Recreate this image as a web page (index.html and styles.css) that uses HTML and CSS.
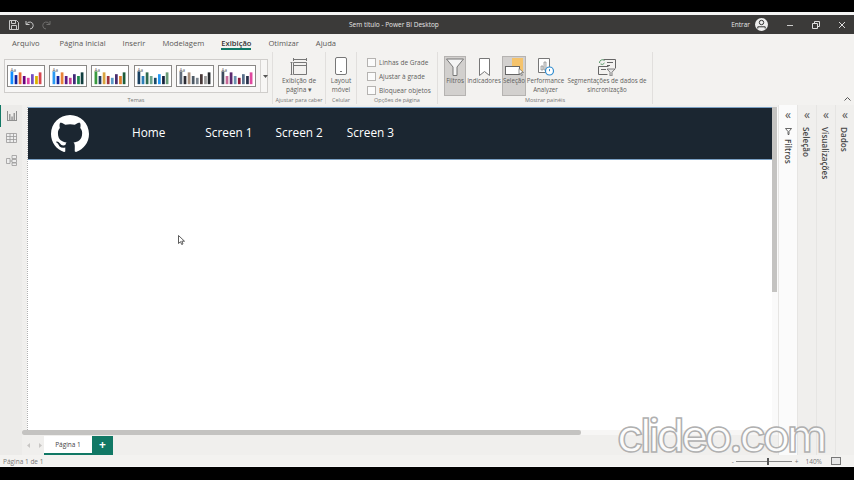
FILE: index.html
```html
<!DOCTYPE html>
<html lang="pt-BR">
<head>
  <meta charset="UTF-8" />
  <title>Sem título - Power BI Desktop</title>
  <link rel="stylesheet" href="styles.css">
</head>
<body>
<div class="frame-edge"></div>
<div class="titlebar">
  <div class="quick">
    <svg width="10" height="10" viewBox="0 0 10 10"><path d="M.5.500h7l2 2v7H.5zM2.500.500v3h4v-3M2.500 9.500v-4h5v4" fill="none" stroke="#c8c8c8"/></svg>
    <svg width="10" height="10" viewBox="0 0 10 10"><path d="M1 1v3.500h3.500M1.500 4.200A3.500 3.500 0 1 1 5 9" fill="none" stroke="#c8c8c8"/></svg>
    <svg width="10" height="10" viewBox="0 0 10 10"><path d="M9 1v3.500H5.500M8.500 4.200A3.500 3.500 0 1 0 5 9" fill="none" stroke="#6f6e6d"/></svg>
  </div>
  <span class="doc-title">Sem título - Power BI Desktop</span>
  <div class="win-controls">
    <span class="signin">Entrar</span>
    <svg class="avatar" width="13" height="13" viewBox="0 0 13 13"><circle cx="6.500" cy="6.500" r="6.500" fill="#eee"/><circle cx="6.500" cy="4.500" r="2.200" fill="none" stroke="#333"/><path d="M2.800 10.500V8.800h7.400v1.700" fill="none" stroke="#333"/></svg>
    <svg class="min" width="8" height="8" viewBox="0 0 8 8"><path d="M1 4.500h6" stroke="#ccc"/></svg>
    <svg class="restore" width="8" height="8" viewBox="0 0 8 8"><path d="M.5 2.500h5v5h-5zM2.500 2.500v-2h5v5h-2" fill="none" stroke="#ddd"/></svg>
    <svg class="close" width="8" height="8" viewBox="0 0 8 8"><path d="M1 1l6 6M7 1L1 7" stroke="#ddd"/></svg>
  </div>
</div>

<nav class="tabs">
  <span>Arquivo</span>
  <span>Página Inicial</span>
  <span>Inserir</span>
  <span>Modelagem</span>
  <span class="active">Exibição</span>
  <span>Otimizar</span>
  <span>Ajuda</span>
</nav>

<section class="ribbon">
  <div class="group g-themes">
    <div class="group-body">
      <div class="themes">
        <svg class="theme" viewBox="0 0 38 22"><text x="2" y="7">Aa</text>
          <rect x="2" y="6" width="3" height="14" fill="#118dff"/><rect x="6.500" y="10" width="3" height="10" fill="#12239e"/><rect x="11" y="7" width="3" height="13" fill="#e66c37"/><rect x="15.500" y="11" width="3" height="9" fill="#6b007b"/><rect x="20" y="13" width="3" height="7" fill="#e044a7"/><rect x="24.500" y="9" width="3" height="11" fill="#744ec2"/><rect x="29" y="11" width="3" height="9" fill="#d9b300"/><rect x="33" y="7" width="3" height="13" fill="#d64550"/></svg>
        <svg class="theme" viewBox="0 0 38 22"><text x="2" y="7">Aa</text>
          <rect x="2" y="6" width="3" height="14" fill="#2b9af3"/><rect x="6.500" y="11" width="3" height="9" fill="#12239e"/><rect x="11" y="7" width="3" height="13" fill="#e8833a"/><rect x="15.500" y="11" width="3" height="9" fill="#5b1d87"/><rect x="20" y="13" width="3" height="7" fill="#c83d95"/><rect x="24.500" y="9" width="3" height="11" fill="#3f2a78"/><rect x="29" y="11" width="3" height="9" fill="#1f8a4c"/><rect x="33" y="7" width="3" height="13" fill="#0f3d3e"/></svg>
        <svg class="theme" viewBox="0 0 38 22"><text x="2" y="7">Aa</text>
          <rect x="2" y="6" width="3" height="14" fill="#3a9a3f"/><rect x="6.500" y="11" width="3" height="9" fill="#223a5e"/><rect x="11" y="7" width="3" height="13" fill="#d9a441"/><rect x="15.500" y="11" width="3" height="9" fill="#a1343c"/><rect x="20" y="13" width="3" height="7" fill="#5b9bc8"/><rect x="24.500" y="9" width="3" height="11" fill="#4a2c6d"/><rect x="29" y="11" width="3" height="9" fill="#e07b28"/><rect x="33" y="7" width="3" height="13" fill="#1d5c3a"/></svg>
        <svg class="theme" viewBox="0 0 38 22"><text x="2" y="7">Aa</text>
          <rect x="2" y="6" width="3" height="14" fill="#173f5f"/><rect x="6.500" y="11" width="3" height="9" fill="#2c7fb8"/><rect x="11" y="7" width="3" height="13" fill="#2f6b4f"/><rect x="15.500" y="11" width="3" height="9" fill="#6ea58c"/><rect x="20" y="13" width="3" height="7" fill="#1b4965"/><rect x="24.500" y="9" width="3" height="11" fill="#2196f3"/><rect x="29" y="11" width="3" height="9" fill="#14213d"/><rect x="33" y="7" width="3" height="13" fill="#6a9c78"/></svg>
        <svg class="theme" viewBox="0 0 38 22"><text x="2" y="7">Aa</text>
          <rect x="2" y="6" width="3" height="14" fill="#5f6b7a"/><rect x="6.500" y="11" width="3" height="9" fill="#2d2d34"/><rect x="11" y="7" width="3" height="13" fill="#a98f7b"/><rect x="15.500" y="11" width="3" height="9" fill="#4d5a66"/><rect x="20" y="13" width="3" height="7" fill="#7d8791"/><rect x="24.500" y="9" width="3" height="11" fill="#4a3a3a"/><rect x="29" y="11" width="3" height="9" fill="#9a9a9a"/><rect x="33" y="7" width="3" height="13" fill="#25282c"/></svg>
        <svg class="theme" viewBox="0 0 38 22"><text x="2" y="7">Aa</text>
          <rect x="2" y="6" width="3" height="14" fill="#3d4a5c"/><rect x="6.500" y="11" width="3" height="9" fill="#c76b98"/><rect x="11" y="7" width="3" height="13" fill="#5b2a6e"/><rect x="15.500" y="11" width="3" height="9" fill="#6c93b0"/><rect x="20" y="13" width="3" height="7" fill="#8e1b3a"/><rect x="24.500" y="9" width="3" height="11" fill="#59708c"/><rect x="29" y="11" width="3" height="9" fill="#27304a"/><rect x="33" y="7" width="3" height="13" fill="#e0489f"/></svg>
        <div class="theme-more">
          <svg width="5" height="3" viewBox="0 0 5 3"><path d="M0 0h5L2.500 3z" fill="#555"/></svg>
        </div>
      </div>
    </div>
    <div class="group-label">Temas</div>
  </div>

  <div class="group g-fit">
    <div class="group-body">
      <div class="rbtn">
        <svg class="ricon" width="18" height="18" viewBox="0 0 18 18"><path d="M3.500 5.500h13v12h-13zM3.500 8.500h13M.5 5.500h2M.5 17.500h2M1.500 5.500v12M3.500 2.500h13M3.500 1v3M16.500 1v3" fill="none" stroke="#777"/></svg>
        <span>Exibição de<br>página ▾</span>
      </div>
    </div>
    <div class="group-label">Ajustar para caber</div>
  </div>

  <div class="group g-cell">
    <div class="group-body">
      <div class="rbtn">
        <svg class="ricon" width="12" height="18" viewBox="0 0 12 18"><rect x=".5" y=".5" width="11" height="17" rx="1.500" fill="#fff" stroke="#777"/><path d="M5 14.500h2" stroke="#777"/></svg>
        <span>Layout<br>móvel</span>
      </div>
    </div>
    <div class="group-label">Celular</div>
  </div>

  <div class="group g-options">
    <div class="group-body">
      <div class="checks">
        <label class="check"><i></i>Linhas de Grade</label>
        <label class="check"><i></i>Ajustar à grade</label>
        <label class="check"><i></i>Bloquear objetos</label>
      </div>
    </div>
    <div class="group-label">Opções de página</div>
  </div>

  <div class="group g-panes">
    <div class="group-body panes-row">
      <div class="rbtn pane-btn on b-filter">
        <svg class="ricon" width="18" height="18" viewBox="0 0 18 18"><path d="M.5 1h17L11 9v8.500H7V9z" fill="#f4f4f4" stroke="#777"/></svg>
        <span>Filtros</span>
      </div>
      <div class="rbtn pane-btn b-mark">
        <svg class="ricon" width="11" height="18" viewBox="0 0 11 18"><path d="M.5.500h10v17l-5-4-5 4z" fill="#fff" stroke="#777"/></svg>
        <span>Indicadores</span>
      </div>
      <div class="rbtn pane-btn on b-sel">
        <svg class="ricon" width="19" height="18" viewBox="0 0 19 18"><rect x="7" y="0" width="11" height="15" fill="#f5c36b"/><rect x=".5" y="8.500" width="14" height="8" fill="#fff" stroke="#666"/><path d="M14 10.500l4.500 4-2.300.2 1.200 2.500-1 .5-1.200-2.500-1.200 1.500z" fill="#fff" stroke="#666" stroke-width=".7"/></svg>
        <span>Seleção</span>
      </div>
      <div class="rbtn pane-btn b-perf">
        <svg class="ricon" width="18" height="18" viewBox="0 0 18 18"><path d="M1.500.500h11v14h-11z" fill="#fff" stroke="#777"/><path d="M4 12V8h2v4zM7 12V4h2v8z" fill="#e8e8e8" stroke="#888" stroke-width=".7"/><circle cx="12.500" cy="13" r="4" fill="#fff" stroke="#2e8ccf" stroke-width="1.200"/><path d="M12.500 11v2.200" stroke="#2e8ccf"/></svg>
        <span>Performance<br>Analyzer</span>
      </div>
      <div class="rbtn pane-btn b-sync">
        <svg class="ricon" width="18" height="18" viewBox="0 0 18 18"><path d="M5.500 1.500h12v9M9 4.500h6M9 7.500h3M.5 8.500h10M.5 8.500v8h9M3 11.500h5" fill="none" stroke="#666"/><path d="M9 11h8l-3 3.200V18h-2v-3.800z" fill="#e6e6e6" stroke="#666" stroke-width=".8"/><path d="M1.500 5a3 3 0 0 1 5-2.500M6.500 5a3 3 0 0 1-4 1" fill="none" stroke="#5a9a6a"/></svg>
        <span>Segmentações de dados de<br>sincronização</span>
      </div>
    </div>
    <div class="group-label">Mostrar painéis</div>
  </div>

  <svg class="collapse" width="7" height="4" viewBox="0 0 7 4"><path d="M.5 3.500l3-3 3 3" fill="none" stroke="#555"/></svg>
</section>

<div class="main">
  <aside class="rail">
    <div class="rail-item current">
      <svg width="10" height="10" viewBox="0 0 10 10"><path d="M.5 0v10M9.500 0v10M.5 9.500h9" stroke="#8f8f8f" fill="none"/><path d="M2 9V3h1.500v6zM4.300 9V5.500h1.500V9zM6.500 9V2H8v7z" fill="#999"/></svg>
    </div>
    <div class="rail-item">
      <svg width="11" height="10" viewBox="0 0 11 10"><path d="M.5.500h10v9H.5zM.5 3.500h10M.5 6.500h10M4 .5v9M7.500.5v9" fill="#eee" stroke="#999" stroke-width=".8"/></svg>
    </div>
    <div class="rail-item">
      <svg width="11" height="11" viewBox="0 0 11 11"><path d="M6 .5h4.500v3H6zM6 4.500h4.500v3H6zM6 8h4.500v2.500H6zM.5 3.500h3.500v5H.5zM4 6h2" fill="#eee" stroke="#999" stroke-width=".8"/></svg>
    </div>
  </aside>

  <div class="center">
    <div class="page-row">
      <div class="canvas">
        <header class="report-nav">
          <svg class="gh-logo" viewBox="0 0 16 16"><path fill="#fff" d="M8 0C3.580 0 0 3.580 0 8c0 3.540 2.290 6.530 5.470 7.590.4.070.55-.17.55-.38 0-.19-.01-.82-.01-1.490-2.010.37-2.530-.49-2.690-.94-.09-.23-.48-.94-.82-1.130-.28-.15-.68-.52-.01-.53.63-.01 1.080.58 1.230.82.72 1.210 1.870.87 2.330.66.07-.52.28-.87.51-1.070-1.780-.2-3.640-.89-3.640-3.950 0-.87.31-1.590.82-2.150-.08-.2-.36-1.020.08-2.120 0 0 .67-.21 2.200.82.64-.18 1.320-.27 2-.27.68 0 1.360.09 2 .27 1.530-1.040 2.200-.82 2.200-.82.44 1.100.16 1.920.08 2.120.51.56.82 1.270.82 2.150 0 3.070-1.870 3.750-3.650 3.950.29.25.54.73.54 1.480 0 1.070-.01 1.930-.01 2.200 0 .21.15.46.55.38A8.013 8.013 0 0016 8c0-4.420-3.580-8-8-8z"/></svg>
          <a class="n-home">Home</a>
          <a class="n-1">Screen 1</a>
          <a class="n-2">Screen 2</a>
          <a class="n-3">Screen 3</a>
        </header>
        <svg class="cursor" width="7" height="10" viewBox="0 0 7 10"><path d="M.5.500v8l2-1.800 1.200 2.800 1.300-.6-1.200-2.700h2.700z" fill="#fff" stroke="#333" stroke-width=".8"/></svg>
      </div>
      <div class="vscroll"><div class="vthumb"></div></div>
    </div>
    <div class="hscroll"><div class="hthumb"></div></div>
    <div class="sheets">
      <div class="sheet-arrows">
        <svg width="3" height="5" viewBox="0 0 3 5"><path d="M3 0v5L0 2.500z" fill="#c8c6c4"/></svg>
        <svg width="3" height="5" viewBox="0 0 3 5"><path d="M0 0v5l3-2.500z" fill="#c8c6c4"/></svg>
      </div>
      <div class="sheet">Página 1</div>
      <div class="sheet-add">+</div>
    </div>
  </div>

  <div class="side-panes">
    <div class="pane pane-filters">
      <span class="chev">«</span>
      <svg class="pane-funnel" width="7" height="7" viewBox="0 0 7 7"><path d="M.5.500h6L4 3.500v3H3v-3z" fill="none" stroke="#444" stroke-width=".8"/></svg>
      <span class="pane-title">Filtros</span>
    </div>
    <div class="pane">
      <span class="chev">«</span>
      <span class="pane-title shifted">Seleção</span>
    </div>
    <div class="pane">
      <span class="chev">«</span>
      <span class="pane-title shifted">Visualizações</span>
    </div>
    <div class="pane">
      <span class="chev">«</span>
      <span class="pane-title shifted">Dados</span>
    </div>
  </div>
</div>

<footer class="statusbar">
  <span>Página 1 de 1</span>
  <div class="zoom">
    <span class="z-sign">-</span>
    <div class="z-track"><i></i></div>
    <span class="z-sign">+</span>
    <span class="z-val">140%</span>
    <svg width="10" height="8" viewBox="0 0 10 8"><rect x=".5" y=".5" width="9" height="7" fill="#e6e6e6" stroke="#777"/></svg>
  </div>
</footer>
<div class="frame-bottom"></div>

<div class="watermark">clideo.com</div>
</body>
</html>
```

FILE: styles.css
```css
* { box-sizing: border-box; }

body {
  margin: 0;
  width: 854px;
  height: 480px;
  overflow: hidden;
  display: flex;
  flex-direction: column;
  position: relative;
  font-family: "Open Sans", "Noto Sans", sans-serif;
  color: #605e5c;
  background: #f3f2f0;
}

.frame-edge {
  height: 15px;
  background: #000;
  border-bottom: 3px solid #f4f4f4;
}
.frame-bottom {
  height: 13px;
  background: #000;
}

/* title bar */
.titlebar {
  height: 19px;
  display: flex;
  align-items: center;
  background: #3b3a39;
  color: #e6e6e6;
  font-size: 6.5px;
}
.quick {
  width: 349px;
  display: flex;
  gap: 6px;
  padding-left: 9px;
}
.win-controls {
  margin-left: auto;
  display: flex;
  align-items: center;
}
.signin { margin-right: 5px; }
.avatar { margin-right: 18px; }
.min { margin-right: 18px; }
.restore { margin-right: 18px; }
.close { margin-right: 8px; }

/* ribbon tabs */
.tabs {
  height: 18px;
  display: flex;
  align-items: center;
  gap: 17px;
  padding-left: 12px;
  font-size: 7.600px;
  color: #5a5856;
}
.tabs span:first-child { margin-right: 3px; }
.tabs .active {
  font-weight: 600;
  color: #333;
  position: relative;
}
.tabs .active::after {
  content: "";
  position: absolute;
  left: 0;
  right: 0;
  bottom: -2px;
  height: 2px;
  background: #117865;
}

/* ribbon */
.ribbon {
  height: 53px;
  display: flex;
  position: relative;
  font-size: 6.5px;
  line-height: 9px;
}
.group {
  display: flex;
  flex-direction: column;
  align-items: center;
  border-right: 1px solid #e1dfdd;
  margin-bottom: 1px;
}
.group-body {
  flex: 1;
  display: flex;
  justify-content: center;
  width: 100%;
}
.group-label {
  font-size: 5.5px;
  line-height: 8px;
  height: 8px;
  color: #777;
}
.g-themes { width: 273px; }
.g-fit { width: 53px; }
.g-cell { width: 31px; }
.g-options { width: 81px; }
.g-panes { width: 215px; }

.themes {
  margin-top: 7px;
  width: 264px;
  height: 34px;
  border: 1px solid #cfcdcb;
  display: flex;
  align-items: center;
  gap: 4.200px;
  padding-left: 2px;
  background: #f7f6f5;
}
.theme {
  flex: none;
  width: 38px;
  height: 22px;
  background: #fff;
  border: 1px solid #8a8886;
}
.theme text {
  font-size: 5px;
  fill: #555;
}
.theme-more {
  flex: none;
  margin-left: auto;
  width: 10px;
  height: 100%;
  border-left: 1px solid #d6d4d2;
  display: flex;
  align-items: center;
  justify-content: center;
}

.rbtn {
  display: flex;
  flex-direction: column;
  align-items: center;
  text-align: center;
  white-space: nowrap;
  padding-top: 5px;
}
.ricon { margin-bottom: 1px; }

.checks {
  width: 100%;
  padding: 6px 0 0 10px;
  display: flex;
  flex-direction: column;
  gap: 5px;
}
.check {
  display: flex;
  align-items: center;
  gap: 3px;
  white-space: nowrap;
}
.check i {
  width: 9px;
  height: 9px;
  background: #fbfbfb;
  border: 1px solid #b5b3b1;
}

.panes-row {
  justify-content: flex-start;
  padding: 4px 0 0 6px;
}
.pane-btn {
  height: 40px;
  padding-top: 1px;
  border: 1px solid transparent;
  font-size: 6.200px;
}
.pane-btn .ricon { margin-bottom: 0; }
.pane-btn.on {
  background: #d2d0ce;
  border-color: #b5b3b1;
}
.b-filter { width: 22px; }
.b-mark { width: 36px; }
.b-sel { width: 24px; }
.b-perf { width: 39px; }
.b-sync { width: 84px; }

.collapse {
  position: absolute;
  right: 3px;
  bottom: 4px;
}

/* main area */
.main {
  flex: 1;
  display: flex;
  min-height: 0;
}
.rail {
  width: 22px;
  background: #ecebe9;
  display: flex;
  flex-direction: column;
}
.rail-item {
  height: 22px;
  display: flex;
  align-items: center;
  justify-content: center;
}
.rail-item.current { border-left: 1px solid #117865; }

.center {
  width: 756px;
  display: flex;
  flex-direction: column;
  background: #f0efed;
}
.page-row {
  flex: 1;
  display: flex;
  padding-left: 5px;
  padding-top: 2px;
  min-height: 0;
}
.canvas {
  flex: 1;
  background: #fff;
  border-left: 1px dotted #b0b0b0;
  position: relative;
}
.report-nav {
  height: 53px;
  background: #1b2631;
  border-top: 1px solid #7aa0c4;
  border-bottom: 1px solid #7aa0c4;
  display: flex;
  align-items: center;
  padding-left: 23px;
  color: #fff;
  font-size: 11.800px;
}
.gh-logo {
  width: 38px;
  height: 38px;
  margin-right: 43px;
}
.report-nav a { margin-bottom: 4px; }
.n-home { margin-right: 40px; }
.n-1 { margin-right: 23px; }
.n-2 { margin-right: 24px; }

.cursor {
  position: absolute;
  left: 150px;
  top: 128px;
}

.vscroll {
  width: 6px;
  background: #fafafa;
}
.vthumb {
  width: 5px;
  height: 185px;
  background: #c4c3c1;
}
.hscroll {
  height: 5px;
  background: #f7f6f5;
}
.hthumb {
  width: 559px;
  height: 5px;
  border-radius: 2px;
  background: #c4c3c1;
}

.sheets {
  height: 20px;
  display: flex;
  align-items: center;
}
.sheet-arrows {
  width: 22px;
  display: flex;
  justify-content: center;
  gap: 9px;
  padding-left: 2px;
}
.sheet {
  width: 48px;
  height: 19px;
  background: #fff;
  border-bottom: 2px solid #117865;
  color: #444;
  font-size: 6.5px;
  line-height: 17px;
  text-align: center;
}
.sheet-add {
  width: 21px;
  height: 19px;
  background: #117865;
  color: #fff;
  font-size: 12px;
  font-weight: 700;
  line-height: 18px;
  text-align: center;
}

/* collapsed side panes */
.side-panes {
  flex: 1;
  display: flex;
}
.pane {
  flex: 1;
  display: flex;
  flex-direction: column;
  align-items: center;
  border-left: 1px solid #e6e5e3;
  background: #f0efed;
  padding-top: 2px;
}
.pane-filters { background: #fbfbfb; }
.chev {
  font-size: 12px;
  line-height: 15px;
  color: #555;
  margin-bottom: 5px;
}
.pane-title {
  writing-mode: vertical-rl;
  font-size: 8.200px;
  line-height: 10px;
  font-weight: 600;
  color: #444;
}
.pane-title.shifted { margin-right: 3px; }
.pane-funnel { margin: 1px 0 4px; }

/* status bar */
.statusbar {
  height: 12px;
  display: flex;
  align-items: center;
  justify-content: space-between;
  padding: 1px 13px 0 3px;
  font-size: 6.5px;
  color: #777;
  border-bottom: 1px solid #f8f8f8;
}
.zoom {
  display: flex;
  align-items: center;
}
.z-track {
  width: 56px;
  height: 1px;
  margin: 0 3px 0 2px;
  background: #888;
  position: relative;
}
.z-track i {
  position: absolute;
  left: 31px;
  top: -3px;
  width: 2px;
  height: 7px;
  background: #555;
}
.z-val { margin: 0 9px 0 7px; }

.watermark {
  position: absolute;
  left: 617px;
  top: 415px;
  font-family: Inter, sans-serif;
  font-size: 46px;
  font-weight: 500;
  line-height: 40px;
  letter-spacing: -3.500px;
  color: rgba(255, 255, 255, 0.8);
  -webkit-text-stroke: 1.500px #b0b0b0;
}
```
